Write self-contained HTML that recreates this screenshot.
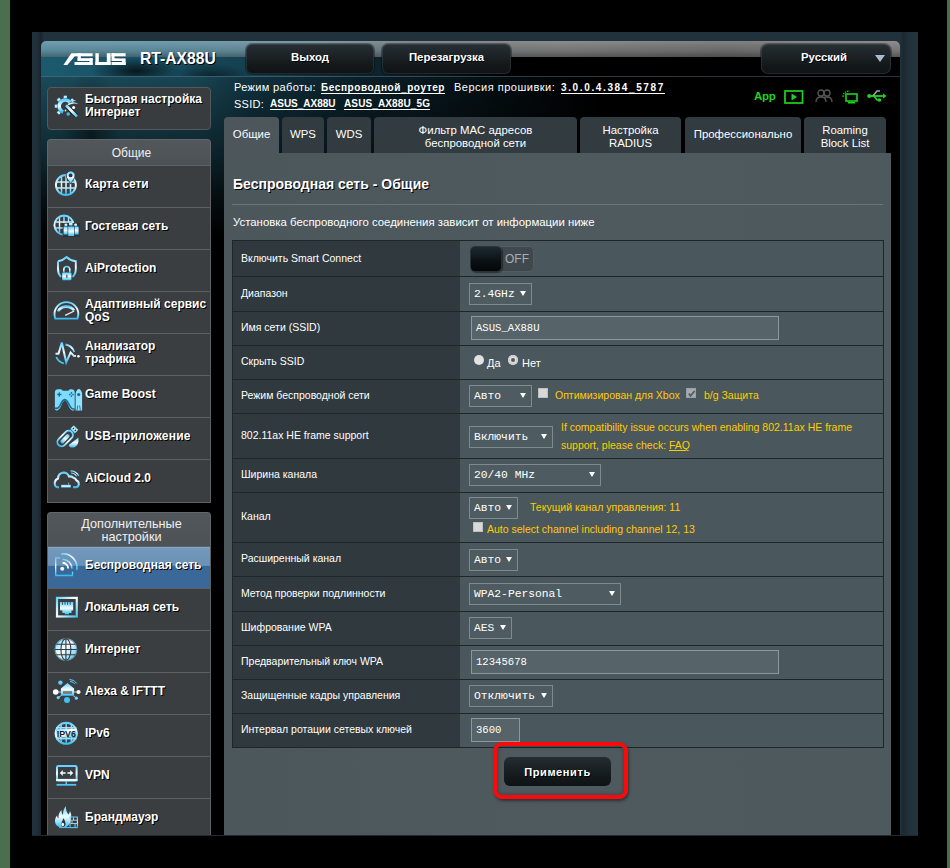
<!DOCTYPE html>
<html><head><meta charset="utf-8">
<style>
*{box-sizing:border-box;margin:0;padding:0}
html,body{width:950px;height:868px;overflow:hidden;background:#000}
body{position:relative;font-family:"Liberation Sans",sans-serif;color:#fff}
.a{position:absolute}
.sh{text-shadow:1px 1px 0 #000}
#gl{left:0;top:0;width:10px;height:868px;background:#4b6f4d}
#gr{left:947px;top:0;width:3px;height:868px;background:#4b6f4d}
#frame{left:32px;top:32px;width:886px;height:803px;background:linear-gradient(90deg,#23343f 0,#1f2e38 6px,#18242c 9px,#22323c 12px,#22323c 868px,#1b2830 871px,#22323d 878px,#24343f 886px)}
#inner{left:41px;top:41px;width:859px;height:794px;background:#000;border-radius:5px 5px 0 0;overflow:hidden}
#hband{left:41px;top:41px;width:859px;height:16px;border-radius:5px 5px 0 0;background:linear-gradient(180deg,rgba(255,255,255,.14),rgba(255,255,255,.04) 30%,rgba(0,0,0,.05) 60%,rgba(0,0,0,.3)),linear-gradient(90deg,#5f90a2 0%,#5d8c9d 15%,#6a8a96 30%,#6f7679 45%,#7a7a7a 60%,#6d6d6d 80%,#7c7c7c 100%)}
#hlow{left:41px;top:57px;width:859px;height:20px;background:radial-gradient(ellipse 45px 14px at 95px 14px,rgba(0,0,0,.7),rgba(0,0,0,0)),radial-gradient(ellipse 40px 14px at 170px 20px,rgba(0,0,0,.5),rgba(0,0,0,0)),linear-gradient(90deg,#1b5a6e 0%,#1a5165 12%,#143f4e 25%,#102e3a 32%,#0a1a22 45%,#000 55%,#000 100%)}
#hline{left:41px;top:76px;width:859px;height:1px;background:linear-gradient(90deg,#3d6878,#35596a 30%,#2a3a42 55%,#2a3136)}
#swirl{left:41px;top:77px;width:859px;height:160px;background:
radial-gradient(ellipse 30px 70px at 50px 60px,rgba(0,0,0,.45),rgba(0,0,0,0) 100%),
linear-gradient(180deg,rgba(0,0,0,0) 0,rgba(0,0,0,.18) 18%,rgba(0,0,0,.42) 45%,rgba(0,0,0,.78) 75%,#000 100%),
linear-gradient(90deg,#1a4a59 0%,#184452 18%,#10303c 25%,#0c222b 35%,#08171d 45%,#040b0e 55%,#000 65%)}
.hbtn{height:30px;border-radius:6px;background:linear-gradient(#283035,#161b1e 60%,#0e1214);box-shadow:0 0 0 1px rgba(0,0,0,.35),inset 0 0 0 1px rgba(130,150,160,.18);font-weight:bold;font-size:11.4px;text-align:center;line-height:27px}
.info{font-size:11.8px;color:#fff;line-height:14px;white-space:nowrap}
.lnk{font-weight:bold;text-decoration:underline;text-underline-offset:2px;font-size:11px}
/* sidebar */
.sbox{background:#393c3f;border:1px solid #55595c;border-radius:4px}
.shead{padding-left:5px;background:linear-gradient(#51575a,#4c5255);border:1px solid #62676a;border-bottom:1px solid #5d6264;border-radius:4px 4px 0 0;color:#f0f0f0;font-size:12px;text-align:center}
.mi{left:47px;width:164px;height:42px;background:#3b3e41;border-left:1px solid #5c6063;border-right:1px solid #5c6063;border-bottom:1px solid #5d6063}
.mt{left:85px;font-weight:bold;font-size:12px;line-height:12.6px;color:#fff;text-shadow:1px 1px 0 #000;white-space:nowrap}
/* tabs */
.tab{top:117px;height:36px;padding-bottom:2px;background:#323b3f;border-radius:4px 4px 0 0;font-size:11.4px;text-align:center;color:#fff;line-height:13px;display:flex;align-items:center;justify-content:center}
#panel{left:224px;top:153px;width:667px;height:682px;background:linear-gradient(90deg,#4c575c,#4f5a5f 50%,#4e595e)}
.lbl{left:233px;width:227px;background:#30393d;font-size:10.5px;color:#fff;white-space:nowrap}
.val{left:460px;width:423px;background:#4a575c}
.hl{left:232px;width:651px;height:1px;background:#1f2629}
.sel{height:22px;border:1px solid #808a8e;background:#4e5c61;font-family:"Liberation Mono",monospace;font-size:11.3px;color:#fff;line-height:20px;padding-left:4px;white-space:nowrap}
.arr{width:0;height:0;border-left:3px solid transparent;border-right:3px solid transparent;border-top:5px solid #fff}
.inp{height:24px;border:1px solid #8c989b;background:#566469;font-family:"Liberation Mono",monospace;font-size:10.6px;color:#fff;line-height:22px;padding-left:4px}
.yl{color:#ffcc00;font-size:10.5px;white-space:nowrap}
.cb{width:10px;height:10px;background:#d8d8d8;border:1px solid #c0c0c0}
</style></head>
<body>
<div id="gl" class="a"></div>
<div id="gr" class="a"></div>
<div id="frame" class="a"></div>
<div id="inner" class="a"></div>
<div class="a" style="left:32px;top:835px;width:886px;height:1px;background:#1e2a32"></div>
<div id="swirl" class="a"></div>
<div id="hband" class="a"></div>
<div id="hlow" class="a"></div>
<div id="hline" class="a"></div>

<!-- ASUS logo -->
<svg class="a" style="left:62px;top:48px" width="66" height="20" viewBox="62 48 66 20"><g fill="#fff">
<path d="M63.4 65 L67.3 65 L74.8 56.3 L92.6 56.3 L92.6 53.2 L71.3 53.2 Z"/>
<rect x="77.6" y="53.2" width="3.2" height="7.8"/><rect x="77.6" y="58.2" width="15" height="2.8"/><rect x="89.5" y="58.2" width="3.1" height="6.8"/><rect x="74.5" y="62" width="18.1" height="3"/>
<rect x="95.4" y="53.2" width="3.4" height="11.8"/><rect x="95.4" y="62" width="15.2" height="3"/><rect x="106.8" y="53.2" width="3.8" height="11.8"/>
<rect x="111.5" y="53.2" width="14.1" height="3.1"/><rect x="111.5" y="53.2" width="3" height="7.8"/><path d="M114 58.2 L122 58.6 L122 61 L114 61Z"/><rect x="121.9" y="58.4" width="3.7" height="6.6"/><rect x="111.5" y="62" width="14.1" height="3"/>
</g></svg>
<div class="a sh" style="left:140px;top:50px;font-weight:bold;font-size:15.7px;white-space:nowrap">RT-AX88U</div>

<div class="a hbtn sh" style="left:246px;top:44px;width:128px">Выход</div>
<div class="a hbtn sh" style="left:382px;top:44px;width:129px">Перезагрузка</div>
<div class="a hbtn sh" style="left:761px;top:44px;width:130px;padding-right:4px;border-radius:7px">Русский</div>
<div class="a" style="left:875px;top:55px;width:0;height:0;border-left:5px solid transparent;border-right:5px solid transparent;border-top:7px solid #a8bccf"></div>

<div class="a info" style="left:234px;top:80px;font-size:11px;letter-spacing:.35px">Режим работы:</div>
<div class="a info lnk" style="left:321px;top:81px;font-size:10px;letter-spacing:.58px">Беспроводной_роутер</div>
<div class="a info" style="left:454px;top:80px;font-size:11px;letter-spacing:.5px">Версия прошивки:</div>
<div class="a info lnk" style="left:561px;top:81px;font-size:10px;letter-spacing:1.63px">3.0.0.4.384_5787</div>
<div class="a info" style="left:234px;top:97px;font-size:11px;letter-spacing:.26px">SSID:</div>
<div class="a info lnk" style="left:270px;top:97px;font-size:10px">ASUS_AX88U</div>
<div class="a info lnk" style="left:344px;top:97px;font-size:10px;letter-spacing:.12px">ASUS_AX88U_5G</div>
<!-- green status icons -->
<div class="a" style="left:754px;top:90px;font-weight:bold;font-size:11.5px;color:#1fd41f;letter-spacing:-0.3px">App</div>
<svg class="a" style="left:784px;top:90px" width="20" height="14" viewBox="0 0 20 14"><rect x="1" y="1" width="17.5" height="12" fill="none" stroke="#1ed41e" stroke-width="1.7"/><path d="M7.5 3.5 L13 7 L7.5 10.5Z" fill="#1ed41e"/></svg>
<svg class="a" style="left:815px;top:89px" width="18" height="14" viewBox="0 0 18 14"><circle cx="6" cy="4" r="3" fill="none" stroke="#585858" stroke-width="1.3"/><circle cx="12" cy="4" r="3" fill="none" stroke="#585858" stroke-width="1.3"/><path d="M1 13 Q1 8 6 8 Q11 8 11 13 M9 8.3 Q11 8 12 8 Q17 8 17 13" fill="none" stroke="#585858" stroke-width="1.3"/></svg>
<svg class="a" style="left:841px;top:89px" width="18" height="15" viewBox="0 0 18 15"><path d="M2 8 Q2 2 9 2" fill="none" stroke="#1ed41e" stroke-width="1.3" stroke-dasharray="1.5 1"/><rect x="5" y="5" width="11" height="7" fill="none" stroke="#1ed41e" stroke-width="1.6"/><rect x="7" y="13" width="7" height="1.5" fill="#1ed41e"/></svg>
<svg class="a" style="left:867px;top:89px" width="20" height="14" viewBox="0 0 20 14"><path d="M1 7 L18 7" stroke="#1ed41e" stroke-width="1.8"/><path d="M16 4.5 L19.5 7 L16 9.5Z" fill="#1ed41e"/><circle cx="2.2" cy="7" r="2" fill="#1ed41e"/><path d="M6 7 L10 2 L13 2" fill="none" stroke="#9aa" stroke-width="1.5"/><path d="M7 7 L10 11 L12 11" fill="none" stroke="#1ed41e" stroke-width="1.6"/><circle cx="12.5" cy="11" r="1.8" fill="#1ed41e"/></svg>

<!-- SIDEBAR -->
<div class="a sbox" style="left:47px;top:87px;width:164px;height:43px"></div>
<div class="a mt" style="top:93px">Быстрая настройка<br>Интернет</div>

<div class="a shead" style="left:47px;top:139px;width:164px;height:27px;line-height:27px">Общие</div>
<div class="a mi" style="top:166px"></div>
<div class="a mi" style="top:208px"></div>
<div class="a mi" style="top:250px"></div>
<div class="a mi" style="top:292px"></div>
<div class="a mi" style="top:334px"></div>
<div class="a mi" style="top:376px"></div>
<div class="a mi" style="top:418px"></div>
<div class="a mi" style="top:460px;height:43px"></div>
<div class="a mt" style="top:178px">Карта сети</div>
<div class="a mt" style="top:220px">Гостевая сеть</div>
<div class="a mt" style="top:262px">AiProtection</div>
<div class="a mt" style="top:298px">Адаптивный сервис<br>QoS</div>
<div class="a mt" style="top:340px">Анализатор<br>трафика</div>
<div class="a mt" style="top:388px">Game Boost</div>
<div class="a mt" style="top:430px;letter-spacing:.25px">USB-приложение</div>
<div class="a mt" style="top:472px">AiCloud 2.0</div>

<div class="a shead" style="left:47px;top:512px;width:164px;height:35px;line-height:13.5px;padding-top:4.8px;font-size:12.7px">Дополнительные<br>настройки</div>
<div class="a mi" style="top:547px;background:linear-gradient(#88a9c9 0,#7398bb 2px,#6b91b6 45%,#3a6898 46%,#3a6898 100%)"></div>
<div class="a mi" style="top:589px"></div>
<div class="a mi" style="top:631px"></div>
<div class="a mi" style="top:673px"></div>
<div class="a mi" style="top:715px"></div>
<div class="a mi" style="top:757px"></div>
<div class="a mi" style="top:799px;height:36px;border-bottom:none"></div>
<div class="a mt" style="top:559px">Беспроводная сеть</div>
<div class="a mt" style="top:601px">Локальная сеть</div>
<div class="a mt" style="top:643px">Интернет</div>
<div class="a mt" style="top:685px">Alexa &amp; IFTTT</div>
<div class="a mt" style="top:727px">IPv6</div>
<div class="a mt" style="top:769px">VPN</div>
<div class="a mt" style="top:811px">Брандмауэр</div>

<!-- CONTENT -->
<div class="a tab" style="left:282px;width:42px">WPS</div>
<div class="a tab" style="left:327px;width:44px">WDS</div>
<div class="a tab" style="left:374px;width:203px;line-height:13.3px;padding-bottom:0;padding-top:4.6px">Фильтр MAC адресов<br>беспроводной сети</div>
<div class="a tab" style="left:580px;width:101px;line-height:13.3px;padding-bottom:0;padding-top:4.6px">Настройка<br>RADIUS</div>
<div class="a tab" style="left:685px;width:116px">Профессионально</div>
<div class="a tab" style="left:804px;width:82px;line-height:13.3px;padding-bottom:0;padding-top:4.6px">Roaming<br>Block List</div>
<div id="panel" class="a"></div>
<div class="a tab" style="left:224px;width:55px;height:40px;background:#4c565b;line-height:12px;align-items:flex-start;padding-top:11px">Общие</div>

<div class="a sh" style="left:233px;top:176px;font-weight:bold;font-size:14px;white-space:nowrap">Беспроводная сеть - Общие</div>
<div class="a" style="left:232px;top:204px;width:651px;height:1px;background:#687579"></div>
<div class="a" style="left:233px;top:216px;font-size:11.4px;white-space:nowrap">Установка беспроводного соединения зависит от информации ниже</div>

<!-- table -->
<div class="a" style="left:232px;top:240px;width:652px;height:508px;background:#1f2629"></div>
<div class="a lbl" style="top:241px;height:35px;line-height:35px;padding-left:8px">Включить Smart Connect</div>
<div class="a val" style="top:241px;height:35px"></div>
<div class="a lbl" style="top:277px;height:34px;line-height:32px;padding-left:8px">Диапазон</div>
<div class="a val" style="top:277px;height:34px"></div>
<div class="a lbl" style="top:312px;height:33px;line-height:31px;padding-left:8px">Имя сети (SSID)</div>
<div class="a val" style="top:312px;height:33px"></div>
<div class="a lbl" style="top:346px;height:33px;line-height:31px;padding-left:8px">Скрыть SSID</div>
<div class="a val" style="top:346px;height:33px"></div>
<div class="a lbl" style="top:380px;height:33px;line-height:31px;padding-left:8px">Режим беспроводной сети</div>
<div class="a val" style="top:380px;height:33px"></div>
<div class="a lbl" style="top:414px;height:44px;line-height:42px;padding-left:8px">802.11ax HE frame support</div>
<div class="a val" style="top:414px;height:44px"></div>
<div class="a lbl" style="top:459px;height:33px;line-height:31px;padding-left:8px">Ширина канала</div>
<div class="a val" style="top:459px;height:33px"></div>
<div class="a lbl" style="top:493px;height:49px;line-height:47px;padding-left:8px">Канал</div>
<div class="a val" style="top:493px;height:49px"></div>
<div class="a lbl" style="top:543px;height:33px;line-height:31px;padding-left:8px">Расширенный канал</div>
<div class="a val" style="top:543px;height:33px"></div>
<div class="a lbl" style="top:577px;height:34px;line-height:32px;padding-left:8px">Метод проверки подлинности</div>
<div class="a val" style="top:577px;height:34px"></div>
<div class="a lbl" style="top:612px;height:33px;line-height:31px;padding-left:8px">Шифрование WPA</div>
<div class="a val" style="top:612px;height:33px"></div>
<div class="a lbl" style="top:646px;height:33px;line-height:31px;padding-left:8px">Предварительный ключ WPA</div>
<div class="a val" style="top:646px;height:33px"></div>
<div class="a lbl" style="top:680px;height:33px;line-height:31px;padding-left:8px">Защищенные кадры управления</div>
<div class="a val" style="top:680px;height:33px"></div>
<div class="a lbl" style="top:714px;height:33px;line-height:31px;padding-left:8px">Интервал ротации сетевых ключей</div>
<div class="a val" style="top:714px;height:33px"></div>

<!-- row1 toggle -->
<div class="a" style="left:470px;top:246px;width:64px;height:26px;border-radius:5px;background:#3f484c;border:1px solid #555d60"></div>
<div class="a" style="left:470px;top:246px;width:32px;height:26px;border-radius:5px;background:linear-gradient(#1c2a31,#0a1013 60%,#040707);border:1px solid #2a3236;box-shadow:1px 1px 1px rgba(0,0,0,.4)"></div>
<div class="a" style="left:505px;top:252px;font-size:12px;color:#a9adaf;line-height:14px">OFF</div>
<!-- row2 -->
<div class="a sel" style="left:469px;top:283px;width:63px">2.4GHz</div><div class="a arr" style="left:520px;top:291px"></div>
<!-- row3 -->
<div class="a inp" style="left:471px;top:316px;width:308px">ASUS_AX88U</div>
<!-- row4 radios -->
<div class="a" style="left:474px;top:355px;width:10px;height:10px;border-radius:50%;background:#e2e2e2"></div>
<div class="a" style="left:487px;top:355.5px;font-size:11px;line-height:14px;color:#fff">Да</div>
<div class="a" style="left:508px;top:355px;width:10px;height:10px;border-radius:50%;background:#e2e2e2;box-shadow:inset 0 0 0 2px #d0d0d0"></div>
<div class="a" style="left:511px;top:358px;width:4px;height:4px;border-radius:50%;background:#555"></div>
<div class="a" style="left:522px;top:355.5px;font-size:11px;line-height:14px;color:#fff">Нет</div>
<!-- row5 -->
<div class="a sel" style="left:469px;top:385px;width:63px">Авто</div><div class="a arr" style="left:520px;top:393px"></div>
<div class="a cb" style="left:538px;top:388px"></div>
<div class="a yl" style="left:555px;top:387.8px;line-height:14px">Оптимизирован для Xbox</div>
<div class="a cb" style="left:686px;top:388px;background:#a4acb0;border-color:#98a0a4"></div>
<svg class="a" style="left:687px;top:389px" width="9" height="9" viewBox="0 0 9 9"><path d="M1.8 4.6 L3.6 6.8 L7.6 2" fill="none" stroke="#5a5d5f" stroke-width="1.8"/></svg>
<div class="a yl" style="left:704px;top:387.8px;line-height:14px">b/g Защита</div>
<!-- row6 -->
<div class="a sel" style="left:469px;top:426px;width:84px">Включить</div><div class="a arr" style="left:541px;top:434px"></div>
<div class="a yl" style="left:561px;top:418px;line-height:18.2px">If compatibility issue occurs when enabling 802.11ax HE frame<br>support, please check: <u>FAQ</u></div>
<!-- row7 -->
<div class="a sel" style="left:469px;top:464px;width:132px">20/40 MHz</div><div class="a arr" style="left:589px;top:472px"></div>
<!-- row8 -->
<div class="a sel" style="left:469px;top:497px;width:49px">Авто</div><div class="a arr" style="left:506px;top:505px"></div>
<div class="a yl" style="left:530px;top:500px;line-height:14px">Текущий канал управления: 11</div>
<div class="a cb" style="left:473px;top:522px"></div>
<div class="a yl" style="left:487px;top:522px;line-height:14px">Auto select channel including channel 12, 13</div>
<!-- row9 -->
<div class="a sel" style="left:469px;top:549px;width:49px">Авто</div><div class="a arr" style="left:506px;top:557px"></div>
<!-- row10 -->
<div class="a sel" style="left:469px;top:583px;width:152px">WPA2-Personal</div><div class="a arr" style="left:609px;top:591px"></div>
<!-- row11 -->
<div class="a sel" style="left:469px;top:617px;width:43px">AES</div><div class="a arr" style="left:500px;top:625px"></div>
<!-- row12 -->
<div class="a inp" style="left:471px;top:650px;width:308px">12345678</div>
<!-- row13 -->
<div class="a sel" style="left:469px;top:685px;width:84px">Отключить</div><div class="a arr" style="left:541px;top:693px"></div>
<!-- row14 -->
<div class="a inp" style="left:471px;top:718px;width:49px">3600</div>
<!-- apply -->
<div class="a" style="left:493px;top:742px;width:135px;height:57px;border:4px solid #fa0a0a;border-radius:9px;box-shadow:1px 2px 3px rgba(0,0,0,.45),inset 0 0 4px rgba(0,0,0,.35)"></div>
<div class="a sh" style="left:504px;top:757px;width:107px;height:29px;border-radius:6px;background:linear-gradient(#242d31,#151b1e 60%,#0f1315);font-weight:bold;font-size:11px;letter-spacing:.6px;text-align:center;line-height:30px">Применить</div>

<svg width="0" height="0" style="position:absolute"><defs>
<linearGradient id="ig" x1="0" y1="0" x2="0" y2="1"><stop offset="0" stop-color="#5fd0ff"/><stop offset=".5" stop-color="#f4fcff"/><stop offset="1" stop-color="#38bdf4"/></linearGradient>
<linearGradient id="ih" x1="0" y1="0" x2="1" y2="1"><stop offset="0" stop-color="#62d3ff"/><stop offset=".45" stop-color="#ffffff"/><stop offset="1" stop-color="#3ec2f6"/></linearGradient>
<linearGradient id="gb" x1="0" y1="0" x2="0" y2="1"><stop offset="0" stop-color="#6ad6ff"/><stop offset="1" stop-color="#9ee6ff"/></linearGradient>
</defs></svg>
<svg class="a" style="left:50px;top:90px" width="32" height="36" viewBox="0 0 32 36">
<path d="M20.05 12.21 A6.2 6.2 0 1 0 13.18 22.03" fill="none" stroke="url(#ig)" stroke-width="3.6"/>
<g fill="url(#ig)"><rect x="13.70" y="5.60" width="3.2" height="2.8" transform="rotate(0 15.30 7.00)"/><rect x="7.19" y="8.29" width="3.2" height="2.8" transform="rotate(-45 8.79 9.69)"/><rect x="4.50" y="14.80" width="3.2" height="2.8" transform="rotate(270 6.10 16.20)"/><rect x="7.19" y="21.31" width="3.2" height="2.8" transform="rotate(225 8.79 22.71)"/><rect x="20.75" y="8.89" width="3.2" height="2.8" transform="rotate(50 22.35 10.29)"/></g>
<path d="M16 15.3 L27 26.4" stroke="#1c2022" stroke-width="4.6"/>
<path d="M16 15.3 L27 26.4" stroke="url(#ih)" stroke-width="2.8"/>
<path d="M17.5 14 Q22.5 10.5 28.8 14.2 Q23 12.5 18.6 15.2Z" fill="#d8f2ff"/>
<path d="M18.5 12.2 Q22 10 25.5 10.6" fill="none" stroke="#8ad6f6" stroke-width=".9"/>
<circle cx="23.6" cy="17.4" r="1.5" fill="#fff"/><circle cx="18.2" cy="24" r="1.7" fill="#3cc2f6"/><circle cx="15.5" cy="20.5" r="0.9" fill="#bfeaff"/></svg>
<svg class="a" style="left:50px;top:168px" width="32" height="32" viewBox="0 0 32 32">
<circle cx="15.9" cy="17" r="10" fill="none" stroke="url(#ig)" stroke-width="1.9"/>
<g stroke="url(#ig)" stroke-width="1.5" fill="none"><path d="M6.5 14 H25 M6.5 20 H25 M11.5 8.5 V26 M16 7 V27 M20.5 8.5 V26"/></g>
<path d="M20.6 16.5 L16.4 9.6 A4.8 4.8 0 1 1 24.8 9.6 Z" fill="#2e3336"/>
<path d="M20.6 15.5 L17 9.4 A4.1 4.1 0 1 1 24.2 9.4 Z" fill="url(#ig)"/>
<circle cx="20.6" cy="7.4" r="1.9" fill="#2f3336"/></svg>
<svg class="a" style="left:50px;top:210px" width="32" height="32" viewBox="0 0 32 32">
<circle cx="14" cy="15.1" r="9.6" fill="none" stroke="url(#ig)" stroke-width="1.9"/>
<g stroke="url(#ig)" stroke-width="1.4" fill="none"><path d="M5 12 H23 M5 18 H14 M9.5 6.5 V23 M14 5.5 V14 M18.5 6.5 V12"/></g>
<path d="M12.6 13 h17 v14 h-17z" fill="#2e3336" opacity=".95"/>
<g fill="url(#ig)"><circle cx="15.9" cy="14.8" r="1.5"/><circle cx="20.8" cy="13.9" r="1.9"/><circle cx="25.6" cy="14.8" r="1.5"/>
<path d="M13.6 17 Q13.6 16.4 14.3 16.4 H17.6 V24.5 H13.6Z"/><path d="M18.2 16.6 H23.4 Q24 16.6 24 17.2 V26 H18.2Z"/><path d="M24.6 16.4 H27.9 Q28.6 16.4 28.6 17 V24.5 H24.6Z"/></g></svg>
<svg class="a" style="left:50px;top:252px" width="32" height="32" viewBox="0 0 32 32">
<path d="M8 9.3 Q13 8.5 16.6 5 Q20.2 8.5 25.8 9.3 V17 Q25.8 22 22.5 25" fill="none" stroke="url(#ig)" stroke-width="1.9"/>
<path d="M8 9.3 V17 Q8 22 11 25" fill="none" stroke="url(#ig)" stroke-width="1.9"/>
<path d="M13.8 20.5 V17.5 A3 3 0 0 1 19.8 17.5 V20.5" fill="none" stroke="url(#ig)" stroke-width="1.6"/>
<rect x="12.2" y="20.5" width="9.2" height="7.8" rx="1" fill="url(#ig)"/><rect x="16.3" y="22.8" width="1.1" height="3" fill="#333"/></svg>
<svg class="a" style="left:50px;top:294px" width="32" height="32" viewBox="0 0 32 32">
<path d="M5.2 24.6 Q4.5 22 4.5 20 A11.9 11.9 0 0 1 28.3 20 Q28.3 22 27.5 24.6 Z" fill="none" stroke="url(#ig)" stroke-width="1.9"/>
<path d="M8 17.5 A9 8 0 0 1 24 16.5" fill="none" stroke="url(#ig)" stroke-width="2.6"/>
<path d="M15.2 21.3 L24.3 17" stroke="#dff4ff" stroke-width="1.3"/></svg>
<svg class="a" style="left:50px;top:336px" width="32" height="32" viewBox="0 0 32 32">
<path d="M5.5 17.7 H8.5 L11.8 6.5 L16.2 26.3 L20.6 16.4 L24 19.9 H26" fill="none" stroke="url(#ig)" stroke-width="2"/>
<circle cx="28.4" cy="20.3" r="1.3" fill="#fff"/>
<path d="M15.5 8.5 Q22 9.5 24.3 16" fill="none" stroke="url(#ig)" stroke-width="1.8"/>
<path d="M6.3 21 Q8.5 26 13.8 27.5" fill="none" stroke="#4cc6f6" stroke-width="1.8"/></svg>
<svg class="a" style="left:48px;top:380px" width="40" height="40" viewBox="0 0 40 40">
<path d="M6.9 12.5 Q6.9 9.3 10.2 9.3 L13.2 9.3 Q14 10.8 15.8 10.8 L19.2 10.8 Q21 10.8 21.8 9.3 L23.6 9.3 Q26.7 9.3 26.7 12.5 L26.7 28.8 Q26.7 30.4 25.2 30.4 L24.2 30.4 Q22.4 30.2 21 27 Q18.5 21 16.8 20.6 Q15 21 12.6 27 Q11.2 30.2 9.2 30.4 L8.4 30.4 Q6.9 30.4 6.9 28.8 Z" fill="#7ddbff"/>
<path d="M6.9 28 Q10 29.5 12 25.5 Q14.5 20 16.8 19.6 Q19 20 21.6 25.5 Q23.5 29.5 26.7 29" fill="none" stroke="#1a6a98" stroke-width="1.6"/>
<path d="M27.6 30.4 V14.5 Q27.6 10.3 30.8 8.8 Q34.1 10.3 34.1 14.5 V30.4 Z" fill="#92e2ff"/>
<circle cx="30.7" cy="14.6" r="1.6" fill="#1a6890"/>
<path d="M29 30.4 L29.8 25.5 M32.4 30.4 L31.6 25.5" stroke="#2a7aa5" stroke-width="1"/>
<g fill="#1a6890"><rect x="9.2" y="13.8" width="4.2" height="1.4"/><rect x="10.6" y="12.4" width="1.4" height="4.2"/><circle cx="23.4" cy="12.9" r=".85"/><circle cx="23.4" cy="16.1" r=".85"/><circle cx="21.8" cy="14.5" r=".85"/><circle cx="25" cy="14.5" r=".85"/></g></svg>
<svg class="a" style="left:50px;top:420px" width="32" height="32" viewBox="0 0 32 32">
<g transform="rotate(45 15 18)"><rect x="11.2" y="9" width="8.5" height="18.5" rx="4.2" fill="none" stroke="url(#ig)" stroke-width="1.8"/><rect x="13.6" y="13" width="3.8" height="11" rx="1.5" fill="url(#ig)"/><rect x="12.3" y="2.8" width="6.4" height="5.2" fill="url(#ig)"/><circle cx="14.2" cy="5.3" r=".8" fill="#333"/><circle cx="16.9" cy="5.3" r=".8" fill="#333"/></g>
<path d="M28.4 17.5 Q29.5 25 24 27.5 Q19 28 18.8 25 Z" fill="url(#ig)"/></svg>
<svg class="a" style="left:50px;top:462px" width="32" height="32" viewBox="0 0 32 32">
<path d="M9 25.3 H7.5 Q4.3 24.5 4.8 20.5 Q5.3 17.5 8 16.5 Q8.3 11 13.5 10.5 Q17.5 10.5 19 14.5 Q21.5 14 23 15.5 Q25.5 16 26.5 18.5 Q29 19.5 28.8 22.3 Q28.5 25 25.5 25.3 H23" fill="none" stroke="url(#ig)" stroke-width="2.1"/>
<rect x="11.2" y="22.8" width="9.5" height="2.8" fill="url(#ig)"/><path d="M18.6 20.6 V22.8" stroke="#7fd4f8" stroke-width=".7"/>
<path d="M20.5 8.8 Q26 8.5 28.8 14" fill="none" stroke="url(#ig)" stroke-width="1.3"/><path d="M21 11 Q25 11 26.6 14.5" fill="none" stroke="url(#ig)" stroke-width="1.2"/></svg>
<svg class="a" style="left:44px;top:540px" width="40" height="40" viewBox="0 0 40 40">
<path d="M16 17.8 H11.7 V35.5 H28.5 V31.8" fill="none" stroke="url(#ig)" stroke-width="1.3"/>
<circle cx="18.2" cy="28.8" r="2" fill="#eaf8ff"/>
<path d="M18.5 22.8 A6 6 0 0 1 24.2 28.5" fill="none" stroke="#fff" stroke-width="1.9"/>
<path d="M18.5 19.2 A9.5 9.5 0 0 1 28 28.8" fill="none" stroke="url(#ig)" stroke-width="1.5"/>
<path d="M17 14 A13.8 13.8 0 0 1 32.8 29.8" fill="none" stroke="url(#ih)" stroke-width="1.6"/></svg>
<svg class="a" style="left:50px;top:592px" width="32" height="32" viewBox="0 0 32 32">
<rect x="7" y="5.9" width="19.8" height="18.6" fill="none" stroke="url(#ih)" stroke-width="2.2"/>
<path d="M10 10 H23.2 V18.5 H21.5 V21 H19 V22.3 H14.8 V21 H12.4 V18.5 H10 Z" fill="url(#ig)"/>
<g stroke="#303437" stroke-width=".8"><path d="M12.5 10 V12.8 M15 10 V12.8 M17.6 10 V12.8 M20.2 10 V12.8"/></g></svg>
<svg class="a" style="left:50px;top:634px" width="32" height="32" viewBox="0 0 32 32">
<circle cx="15.9" cy="15.5" r="10.8" fill="url(#ih)"/>
<g fill="none" stroke="#343a3d" stroke-width="1.1"><circle cx="15.9" cy="15.5" r="10.8" stroke="#6a9fb6"/><ellipse cx="15.9" cy="15.5" rx="5" ry="10.8"/><path d="M15.9 4.7 V26.3 M5.1 15.5 H26.7 M6.5 10.2 H25.3 M6.5 20.8 H25.3"/></g></svg>
<svg class="a" style="left:48px;top:676px" width="36" height="36" viewBox="0 0 36 36">
<g stroke="#cfeeff" stroke-width=".8"><path d="M7.7 16 H13 M25 16 H30.5 M10.2 21.6 L14 19 M28.4 22.2 L24.5 19 M19 21 V24"/></g>
<path d="M12.9 12.5 L19.5 7 L26.1 12.5 V19.8 H12.9 Z" fill="url(#ig)"/>
<rect x="15" y="15.2" width="9" height="2.6" fill="#777"/>
<circle cx="7.7" cy="16" r="2.8" fill="#fff"/><circle cx="30.5" cy="16" r="2.1" fill="#f4fcff"/><circle cx="12.4" cy="6.6" r="2.2" fill="#5fd0ff"/><circle cx="19" cy="24" r="3" fill="#3cc0f5"/><circle cx="10.2" cy="21.6" r="1.6" fill="#6ad6ff"/><circle cx="28.4" cy="22.2" r="1.6" fill="#6ad6ff"/>
<path d="M21.5 3.5 Q26.5 3.5 28.8 7.5 M22 5.5 Q25.5 5.5 27 8.2" fill="none" stroke="#5fd0ff" stroke-width="1"/></svg>
<svg class="a" style="left:50px;top:718px" width="32" height="32" viewBox="0 0 32 32">
<circle cx="16.2" cy="15.3" r="10.6" fill="none" stroke="url(#ig)" stroke-width="1.9"/>
<g stroke="url(#ig)" stroke-width="1.4" fill="none"><path d="M6 9.8 H26.4 M6 20.8 H26.4 M16.2 5 V25.6 M11.5 5.5 Q9.5 15 11.5 25 M21 5.5 Q23 15 21 25"/></g>
<rect x="5.8" y="10.8" width="20.8" height="8.8" fill="url(#ih)"/>
<text x="6.7" y="18.8" font-family="Liberation Sans" font-weight="bold" font-size="9.4" textLength="19.2" lengthAdjust="spacingAndGlyphs" fill="#16232a">IPV6</text></svg>
<svg class="a" style="left:50px;top:760px" width="32" height="32" viewBox="0 0 32 32">
<rect x="7" y="5.9" width="19.6" height="14.8" rx="1.3" fill="none" stroke="url(#ig)" stroke-width="2"/>
<path d="M6 20 H27.6" stroke="#eaf8ff" stroke-width="2.2"/>
<path d="M16.2 21.5 V24" stroke="#cfeeff" stroke-width="1"/>
<path d="M6.5 24.8 H26.2" stroke="#4cc6f6" stroke-width="1.8"/>
<g fill="#e8f8ff"><path d="M9.8 13 L12.8 10 V16Z M23.2 13 L20.2 10 V16Z"/><rect x="12" y="12.2" width="3.6" height="1.6"/><rect x="17.4" y="12.2" width="3.6" height="1.6"/></g></svg>
<svg class="a" style="left:50px;top:802px" width="32" height="32" viewBox="0 0 32 32">
<path d="M9 25 Q4.5 23 5 18 Q5.5 15 7 13.5 Q7.2 15.5 8.5 16.5 Q8 11 11.5 8 Q11.3 11 13 13 Q13 7 16 4 Q15.5 9 18.5 12.5 Q19.5 10.5 20 9 Q22.5 14 20 20 Q19 24 16 25.5 Z" fill="url(#ig)"/>
<path d="M12 25 Q10.5 22 12.5 18.5 Q13.5 16.5 13.4 16 Q15.5 19 15.6 22 Q15.3 25 12 25Z" fill="#2e3336"/>
<ellipse cx="12.8" cy="22.6" rx="1.3" ry="1.8" fill="#fff"/>
<rect x="20" y="15" width="7.4" height="10.6" fill="none" stroke="url(#ig)" stroke-width="1"/>
<g stroke="#a8dcf2" stroke-width=".9"><path d="M20.5 18.2 H27 M20.5 21.5 H27 M23.5 15.5 V18 M22 18.5 V21 M25 21.8 V25"/></g>
<path d="M9 25.6 H27.5" stroke="#4cc6f6" stroke-width="1"/></svg>
<!--END-->
</body></html>
